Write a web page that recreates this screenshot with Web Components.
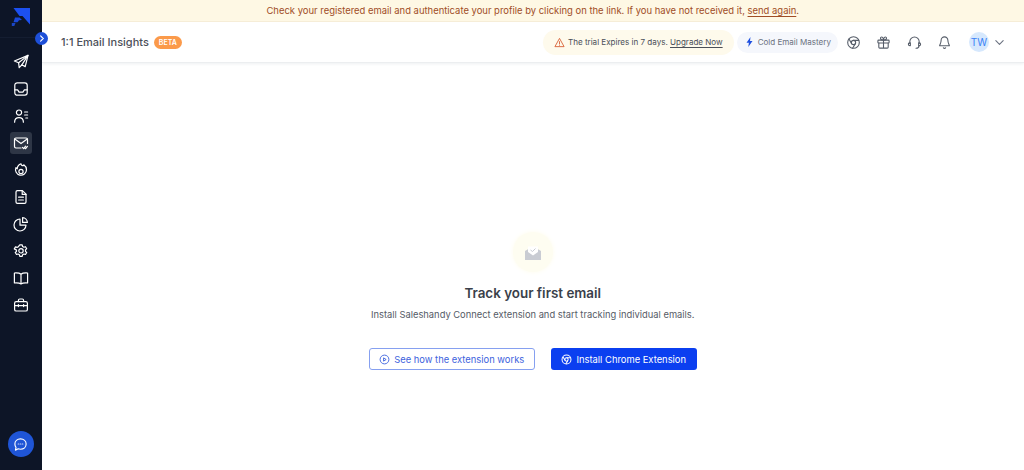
<!DOCTYPE html>
<html>
<head>
<meta charset="utf-8">
<title>1:1 Email Insights</title>
<style>
  html,body{margin:0;height:100%;background:#fff;font-family:Inter,"Liberation Sans",sans-serif;overflow:hidden}
</style>
</head>
<body>
<app-shell>
  <side-nav slot="side"></side-nav>
  <top-banner slot="main"></top-banner>
  <page-header slot="main"></page-header>
  <empty-state slot="main"></empty-state>
</app-shell>

<script>
class appShell extends HTMLElement{
    constructor(){
        super();
        this.attachShadow({mode:'open'})
        this.shadowRoot.innerHTML=`
        <style>
        :host{display:flex;height:470px;width:1024px}
        .side{flex:0 0 41.5px;display:flex;position:relative;z-index:2}
        .main{flex:1;min-width:0;display:flex;flex-direction:column}
        </style>
        <div class="side"><slot name="side"></slot></div>
        <div class="main"><slot name="main"></slot></div>
        `;
    }
}
customElements.define('app-shell',appShell)

const icons={
    send:`<path d="M15 1.400 1.400 7l4.200 1.800.6 4.800 2.600-2.800 3.400 1.800z"/><path d="M15 1.400 5.600 8.800M15 1.400 8.800 10.800"/>`,
    inbox:`<rect x="1.800" y="1.800" width="12.400" height="12.400" rx="2.400"/><path d="M1.800 8.800h2.800l1.500 2.300h3.800l1.500-2.300h2.800"/>`,
    users:`<circle cx="6" cy="4.600" r="2.600"/><path d="M1.600 14.200c0-2.900 1.900-4.600 4.400-4.600s4.400 1.700 4.400 4.600"/><path d="M11.600 4h3M11.600 7h3M12.800 10h1.800"/>`,
    mailcheck:`<path d="M14.500 8.500V4.400c0-.9-.6-1.400-1.400-1.400H2.900c-.8 0-1.400.5-1.400 1.400v7.200c0 .9.600 1.400 1.400 1.400H8"/><path d="m1.800 4 6.200 4.600L14.200 4"/><path d="m9.400 12.400 1.200 1.200 2-2.400M12.200 13.400l.4.300 1.800-2.300"/>`,
    flame:`<path d="M8 1.800c.3 1.600 1.400 2 2.400 1.800l.4-.8c1.500 1 2.700 2.900 2.700 5A5.500 5.500 0 1 1 2.900 5.600l1.300 1.200C4.400 4.600 5.800 2.600 8 1.800z"/><circle cx="8" cy="9.400" r="2.100"/>`,
    doc:`<path d="M3 3c0-.8.600-1.400 1.400-1.400h5L13 5.200v7.800c0 .8-.6 1.400-1.400 1.400H4.400c-.8 0-1.400-.6-1.400-1.400z"/><path d="M9.200 1.800v3.600H13M5.600 8.200h4.800M5.600 11h4.800"/>`,
    pie:`<path d="M7 3a6 6 0 1 0 6 6.200H7z"/><path d="M9.600 1.600a5 5 0 0 1 4.800 4.800H9.600z"/>`,
    gear:`<path d="M6.800 1.800h2.400l.4 1.700 1.300.7 1.600-.5 1.200 2-1.200 1.200v1.400l1.200 1.200-1.200 2-1.600-.5-1.300.7-.4 1.700H6.800l-.4-1.700-1.300-.7-1.600.5-1.200-2 1.200-1.200V7.100L1.300 5.900l1.200-2 1.600.5 1.300-.7z"/><circle cx="8" cy="7.800" r="2.200"/>`,
    book:`<path d="M8 4.200C6.600 3 4.400 2.800 1.400 3v10c3-.2 5.200 0 6.600 1 1.400-1 3.600-1.200 6.600-1V3c-3-.2-5.200 0-6.600 1.200zM8 4.200V14"/>`,
    case:`<rect x="1.600" y="4.600" width="12.800" height="9.400" rx="1.600"/><path d="M5.400 4.600V3.400c0-.8.500-1.400 1.300-1.400h2.600c.8 0 1.300.6 1.300 1.400v1.200M1.600 8.600h12.800M5.400 7.600v2M10.600 7.600v2"/>`
}

class sideNav extends HTMLElement{
    constructor(){
        super();
        this.attachShadow({mode:'open'})
        const items=['send','inbox','users','mailcheck','flame','doc','pie','gear','book','case']
        this.shadowRoot.innerHTML=`
        <style>
        :host{display:flex;flex-direction:column;align-items:center;width:41.5px;height:470px;background:#0d1527;position:relative;box-sizing:border-box}
        .logo{height:38px;width:100%;display:flex;justify-content:center;padding-top:8px;box-sizing:border-box;border-bottom:1px solid #141d31}
        .items{display:flex;flex-direction:column;align-items:center;gap:5px;padding-top:13px}
        .item{width:22px;height:22px;display:flex;align-items:center;justify-content:center;border-radius:3px}
        .item.on{background:#2e3646}
        svg.i{width:16px;height:16px;fill:none;stroke:#fff;stroke-width:1.200;stroke-linecap:round;stroke-linejoin:round}
        .toggle{position:absolute;left:35px;top:31.500px;width:13px;height:13px;border-radius:50%;background:#1d4fd8;display:flex;align-items:center;justify-content:center}
        .chat{margin-top:auto;margin-bottom:13px;width:26px;height:26px;border-radius:50%;background:#1f55d6;display:flex;align-items:center;justify-content:center}
        </style>
        <div class="logo">
          <svg width="19" height="19" viewBox="0 0 19 19">
            <path d="M2.500 0H19V16.500L11.500 8H8.500z" fill="#1c50f0"/>
            <path d="M4 9.500h4.500l2.500 2.500-3 .2-1.500 2H2.500z" fill="#1a48d8"/>
            <path d="M.8 15h3.700l-1.200 3H.8z" fill="#1a45c4"/>
          </svg>
        </div>
        <div class="toggle"><svg width="7" height="7" viewBox="0 0 8 8"><path d="m3 1 3 3-3 3" fill="none" stroke="#fff" stroke-width="1.300" stroke-linecap="round"/></svg></div>
        <div class="items">
          ${items.map(n=>`<div class="item ${n=='mailcheck'?'on':''}"><svg class="i" viewBox="0 0 16 16">${icons[n]}</svg></div>`).join('')}
        </div>
        <div class="chat">
          <svg width="15" height="15" viewBox="0 0 16 16"><path d="M8 2c3.500 0 6 2.300 6 5.500S11.500 13 8 13c-.9 0-1.700-.1-2.400-.4L2.600 14l.6-3C2.400 10 2 8.800 2 7.500 2 4.300 4.500 2 8 2z" fill="none" stroke="#fff" stroke-width="1.200" stroke-linejoin="round"/><path d="M5.500 7.500h.6M7.700 7.500h.6M9.900 7.500h.6" stroke="#cdd9f8" stroke-width="1.200" stroke-linecap="round"/></svg>
        </div>
        `;
    }
}
customElements.define('side-nav',sideNav)

class topBanner extends HTMLElement{
    constructor(){
        super();
        this.attachShadow({mode:'open'})
        this.shadowRoot.innerHTML=`
        <style>
        :host{display:flex;justify-content:center;align-items:center;height:22px;box-sizing:border-box;background:#fef8e4;border-bottom:1px solid #f8ecd2;color:#a04d26;font-size:9.450px}
        u{text-underline-offset:2px}
        </style>
        <span>Check your registered email and authenticate your profile by clicking on the link. If you have not received it, <u>send again</u>.</span>
        `;
    }
}
customElements.define('top-banner',topBanner)

class pageHeader extends HTMLElement{
    constructor(){
        super();
        this.attachShadow({mode:'open'})
        const svg=(p)=>`<svg class="t" viewBox="0 0 16 16">${p}</svg>`
        this.shadowRoot.innerHTML=`
        <style>
        :host{display:flex;align-items:center;height:41px;box-sizing:border-box;padding:0 19px 0 19.500px;background:#fff;border-bottom:1px solid #eceef0;box-shadow:0 1px 3px #eef0f2;color:#3f4450;position:relative}
        h1{margin:0;font-size:11px;font-weight:500;color:#4b4f58}
        .beta{margin-left:5px;background:#fb9a4a;color:#fff;font-size:7px;font-weight:600;padding:2px 5px;border-radius:7px;line-height:9px}
        .right{margin-left:auto;display:flex;align-items:center}
        .trial{display:flex;align-items:center;gap:3px;height:25px;padding:0 11px;border-radius:12.500px;background:#fefaec;font-size:8.060px;color:#4b4f58;margin-right:3px}
        .trial u{text-underline-offset:2px}
        .mastery{display:flex;align-items:center;gap:5px;height:21px;padding:0 7px 0 9px;border-radius:11px;background:#f5f7fc;font-size:8.050px;color:#6b7280}
        .tools{display:flex;align-items:center;gap:15.500px;margin:0 17px 0 7.500px}
        svg.t{width:15px;height:15px;fill:none;stroke:#565d69;stroke-width:1.150;stroke-linecap:round;stroke-linejoin:round;display:block}
        .avatar{width:20px;height:20px;border-radius:50%;background:#d6e8fd;color:#3b82f6;font-size:10px;display:flex;align-items:center;justify-content:center}
        .chev{margin-left:5px}
        </style>
        <h1>1:1 Email Insights</h1><span class="beta">BETA</span>
        <div class="right">
          <div class="trial">
            <svg width="11" height="11" viewBox="0 0 12 12"><path d="M6 1.500 11 10.500H1z" fill="none" stroke="#d9633a" stroke-width="1" stroke-linejoin="round"/><path d="M6 5v2.500M6 8.900v.1" stroke="#d9633a" stroke-width="1" stroke-linecap="round"/></svg>
            <span>The trial Expires in 7 days. <u>Upgrade Now</u></span>
          </div>
          <div class="mastery">
            <svg width="7" height="10" viewBox="0 0 7 10"><path d="M4.500 0 .5 5.800h2.400L2.300 10l4.200-6H4z" fill="#1d4fe0"/></svg>
            <span>Cold Email Mastery</span>
          </div>
          <div class="tools">
            ${svg('<circle cx="8" cy="8" r="6.200"/><circle cx="8" cy="8" r="2.300"/><path d="M8 5.700h5.600M6 9.200 3.200 4.300M10 9.200 7 14.100"/>')}
            ${svg('<rect x="2" y="5.500" width="12" height="3" rx=".8"/><path d="M3 8.500V13c0 .6.400 1 1 1h8c.6 0 1-.4 1-1V8.500M8 5.500V14M8 5.500C6 5.500 4.800 4.700 4.800 3.400 4.800 2.400 6 1.700 7 2.500c.6.500 1 1.700 1 3zM8 5.500c2 0 3.200-.8 3.200-2.100 0-1-1.200-1.700-2.200-.9-.6.500-1 1.700-1 3z"/>')}
            ${svg('<path d="M3 9V7.200a5 5 0 0 1 10 0V9"/><path d="M3 8.400c-1 0-1.500.6-1.500 1.400s.5 1.500 1.500 1.500h.6V8.400zM13 8.400c1 0 1.500.6 1.500 1.400s-.5 1.500-1.500 1.500h-.6V8.400z"/><path d="M12.800 11.400c0 1.700-1.200 2.800-3.200 2.800"/>')}
            ${svg('<path d="M8 2a3.600 3.600 0 0 0-3.600 3.600c0 3.400-1.600 4.900-1.600 5.900h10.400c0-1-1.600-2.500-1.600-5.900A3.600 3.600 0 0 0 8 2z"/><path d="M6.800 13.600c.3.500.7.700 1.200.7s.9-.2 1.200-.7"/>')}
          </div>
          <div class="avatar">TW</div>
          <svg class="chev" width="11" height="11" viewBox="0 0 12 12"><path d="m2 4 4 4 4-4" fill="none" stroke="#6b7280" stroke-width="1.200" stroke-linecap="round" stroke-linejoin="round"/></svg>
        </div>
        `;
    }
}
customElements.define('page-header',pageHeader)

class emptyState extends HTMLElement{
    constructor(){
        super();
        this.attachShadow({mode:'open'})
        const chrome=(c)=>`<svg width="11" height="11" viewBox="0 0 16 16" fill="none" stroke="${c}" stroke-width="1.500"><circle cx="8" cy="8" r="6.500"/><circle cx="8" cy="8" r="2.400"/><path d="M8 5.600h6M6 9.300 3 4.200M10 9.300 7 14.400"/></svg>`
        this.shadowRoot.innerHTML=`
        <style>
        :host{flex:1;display:flex;flex-direction:column;align-items:center;padding-top:169px;box-sizing:border-box;background:#fff}
        .glow{width:40px;height:40px;border-radius:50%;background:#fefdf1;box-shadow:0 0 5px #fefcec;display:flex;align-items:center;justify-content:center}
        h2{margin:12px 0 0;font-size:13.400px;font-weight:600;color:#3a3f4a;line-height:18px}
        p{margin:6px 0 0;font-size:9.360px;color:#555b66;line-height:14px}
        .btns{display:flex;gap:16px;margin-top:26px}
        .btn{height:22px;box-sizing:border-box;border-radius:3px;display:flex;align-items:center;justify-content:center;gap:4px;font-size:9.400px}
        .ghost{width:166px;border:1px solid #86a0f0;color:#3d63dd}
        .solid{width:146px;background:#0b3ff0;color:#fff}
        </style>
        <div class="glow">
          <svg width="16" height="15" viewBox="0 0 16 15">
            <path d="M0 6 5 3h6l5 3v9H0z" fill="#c9ccd3"/>
            <path d="M3 1.500h10V7L8 10.500 3 7z" fill="#fff"/>
            <path d="m5.500 5 2 1.500L10.500 3.500" fill="none" stroke="#c9ccd3" stroke-width="1"/>
          </svg>
        </div>
        <h2>Track your first email</h2>
        <p>Install Saleshandy Connect extension and start tracking individual emails.</p>
        <div class="btns">
          <div class="btn ghost">
            <svg width="11" height="11" viewBox="0 0 12 12" fill="none" stroke="#3d63dd" stroke-width="1"><circle cx="6" cy="6" r="4.800"/><path d="M5 4.200 7.800 6 5 7.800z"/></svg>
            <span>See how the extension works</span>
          </div>
          <div class="btn solid">${chrome('#fff')}<span>Install Chrome Extension</span></div>
        </div>
        `;
    }
}
customElements.define('empty-state',emptyState)
</script>
</body>
</html>
